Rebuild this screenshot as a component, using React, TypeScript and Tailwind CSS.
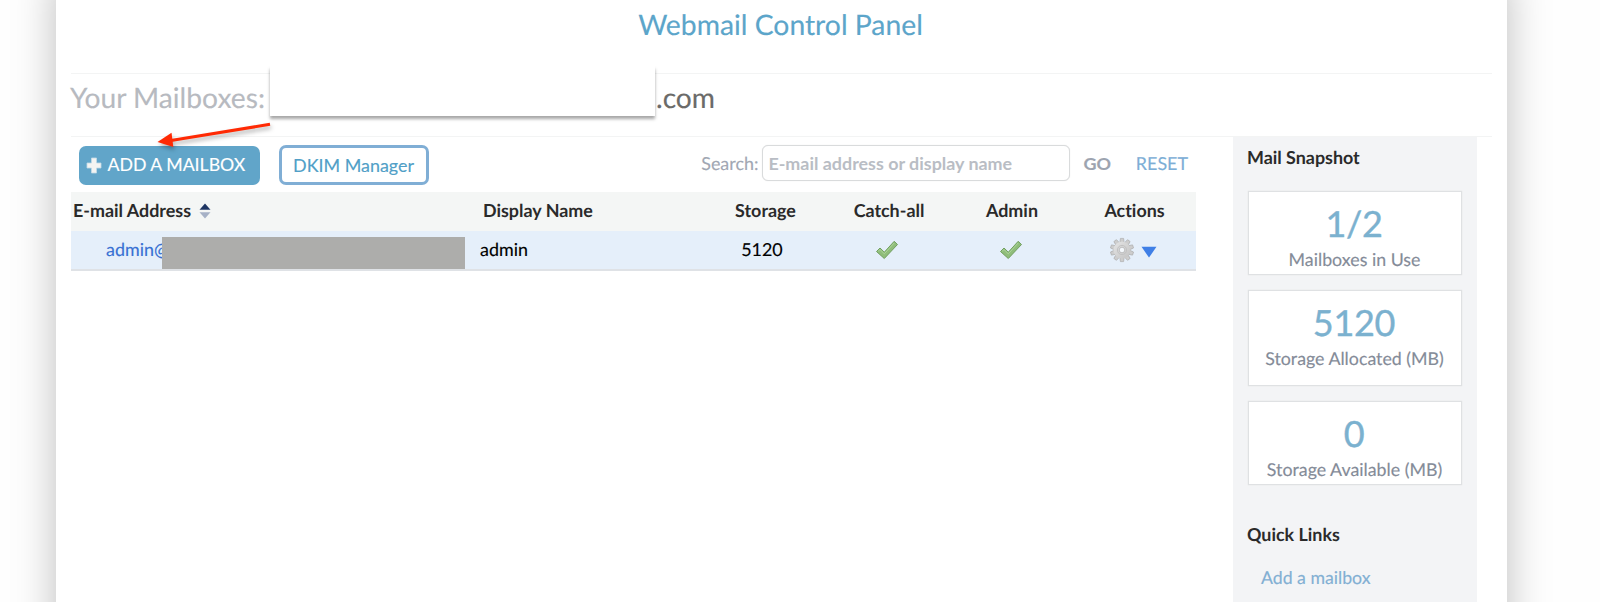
const stats = [
  { value: "1/2", label: "Mailboxes in Use", height: "h-[84px]" },
  { value: "5120", label: "Storage Allocated (MB)", height: "h-[96px]" },
  { value: "0", label: "Storage Available (MB)", height: "h-[84px]" },
];

const columns = "grid grid-cols-[408px_240px_126px_123px_123px_105px]";

function PlusIcon() {
  return (
    <svg width="16" height="17" viewBox="0 0 16 17" className="shrink-0">
      <path d="M5.5 1h5v5H15v5h-4.500v5h-5v-5H1V6h4.500z" fill="#f4f4f2" stroke="#c3dbe7" strokeWidth="0.8" />
    </svg>
  );
}

function SortIcon() {
  return (
    <svg width="12" height="16" viewBox="0 0 12 16" className="mt-[2px]">
      <path d="M6 0.500 11.500 6.700h-11z" fill="#1e3563" />
      <path d="M6 15.500 11.500 9.300h-11z" fill="#a6b1c6" />
    </svg>
  );
}

function CheckIcon() {
  return (
    <svg width="24" height="20" viewBox="0 0 24 20">
      <path d="M1.500 11.500 5 8l4.300 4.200L19.200 1.300 22.500 4.500 9.300 18.500z" fill="#8fbd7a" stroke="#719f60" strokeWidth="1" strokeLinejoin="round" />
      <path d="M3.200 11.200 5 9.600l4.300 4.200L19.200 3" fill="none" stroke="#add59a" strokeWidth="1" />
    </svg>
  );
}

function GearIcon() {
  const teeth = [0, 36, 72, 108, 144, 180, 216, 252, 288, 324];
  return (
    <svg width="26" height="26" viewBox="0 0 26 26">
      <defs>
        <linearGradient id="gear" x1="0" y1="0" x2="1" y2="1">
          <stop offset="0" stopColor="#e6e6e6" />
          <stop offset="1" stopColor="#c2c2c2" />
        </linearGradient>
      </defs>
      {teeth.map((a) => (
        <path key={a} d="M10.900 5.500 11.400 1.400h3.200l0.500 4.100z" fill="#cdcdcd" stroke="#aeaeae" strokeWidth="0.700" transform={`rotate(${a} 13 13)`} />
      ))}
      <circle cx="13" cy="13" r="8.600" fill="url(#gear)" />
      <circle cx="13" cy="13" r="4.600" fill="none" stroke="#c2c2c2" strokeWidth="1" />
      <circle cx="13" cy="13" r="2.800" fill="#f3f7fb" stroke="#b5b5b5" strokeWidth="0.800" />
    </svg>
  );
}

function CaretIcon() {
  return (
    <svg width="16" height="12" viewBox="0 0 16 12" className="mt-[3px]">
      <path d="M0.500 0.800h15L8 11.600z" fill="#3f7fe6" />
    </svg>
  );
}

function Arrow() {
  return (
    <svg width="120" height="40" viewBox="0 0 120 40" className="absolute left-[80px] top-[46px] drop-shadow-[1px_3px_2px_rgba(0,0,0,0.3)]">
      <path d="M119 4.300 20 20.500" stroke="#ff2a04" strokeWidth="3" />
      <path d="M6.500 22 20.500 12.800 22.300 27z" fill="#ff2a04" />
    </svg>
  );
}

export default function App() {
  return (
    <div className="h-[602px] overflow-hidden bg-[#fefefe] font-['Lato',sans-serif] text-[17.900px] leading-6 [font-variant-ligatures:none] [text-rendering:geometricPrecision] [-webkit-text-stroke:0.15px]">
      <main className="-mt-6 ml-14 h-[740px] w-[1451px] bg-white px-[15px] pt-6 shadow-[0_0_40px_rgba(0,0,0,0.26)]">
        <h1 className="-ml-[2px] h-[73px] pt-[9px] text-center text-[28.300px] leading-8 text-[#5ca5ca]">Webmail Control Panel</h1>

        <div className="relative flex h-16 items-start border-y border-[#f3f4f4] pt-2 text-[28.200px] leading-8">
          <span className="w-[199px] whitespace-nowrap text-[#b7bac0]"><span className="-ml-px">Your Mailboxes:</span></span>
          <div className="relative -mt-4 h-[50px] w-[385px] shrink-0 bg-white shadow-[0_3px_3px_rgba(0,0,0,0.35)]">
            <div className="absolute -left-1 -right-1 -top-2 h-2 bg-white" />
          </div>
          <span className="pl-px text-[#6b6b69]">.com</span>
          <Arrow />
        </div>

        <div className="flex">
          <section className="w-[1125px]">
            <div className="flex h-[55px] items-start">
              <button className="ml-[7.5px] mt-[9px] flex h-[39px] w-[181px] items-center gap-[6px] rounded-[7px] bg-[#61a5c9] pb-px pl-[7px] text-[17.700px] whitespace-nowrap text-white">
                <PlusIcon />
                ADD A MAILBOX
              </button>
              <button className="ml-[19px] mt-2 h-10 w-[150px] rounded-[7px] border-3 border-[#80aed5] pb-px text-[#519fc7]">DKIM Manager</button>
              <div className="ml-auto flex items-center pt-2">
                <label className="text-[#a1a7b3]">Search:</label>
                <input className="ml-1 h-[36px] w-[308px] rounded-[6px] border border-[#d9dbdc] bg-white px-[5px] pb-px font-bold shadow-[0_0_1px_#ddd] [-webkit-text-stroke:0] placeholder:text-[#b9bdc4]" placeholder="E-mail address or display name" />
                <button className="ml-[13px] font-bold text-[#9da4b0]">GO</button>
                <a className="ml-[25px] mr-2 text-[#7daed6]">RESET</a>
              </div>
            </div>

            <div className={`${columns} h-[39px] items-center bg-[#f4f6f5] pb-[3px] font-bold text-[#2a2a2a] [-webkit-text-stroke:0]`}>
              <div className="flex items-center gap-2 pl-[2px]">
                E-mail Address
                <SortIcon />
              </div>
              <div className="pl-1">Display Name</div>
              <div className="pr-[33px] text-center">Storage</div>
              <div className="pr-[35px] text-center">Catch-all</div>
              <div className="pr-[35px] text-center">Admin</div>
              <div className="pr-[18px] text-center">Actions</div>
            </div>
            <div className={`${columns} h-10 items-center border-b-2 border-[#dfe2e6] bg-[#e5effa] text-black`}>
              <div className="flex h-[38px] items-start pl-[35px] text-[#3871d3]">
                <div className="w-14 pt-[6px]">admin@</div>
                <div className="relative mt-[6px] h-8 w-[303px] bg-[#adadab]" />
              </div>
              <div className="pb-[2px] pl-[1px]">admin</div>
              <div className="pr-10 pb-[2px] text-center">5120</div>
              <div className="flex justify-center pr-10"><CheckIcon /></div>
              <div className="flex justify-center pr-[38px]"><CheckIcon /></div>
              <div className="flex items-center gap-[6px] pl-[18px]">
                <GearIcon />
                <CaretIcon />
              </div>
            </div>
          </section>

          <aside className="ml-[37px] h-[465px] w-[244px] bg-[#f3f4f6] px-[15px] pt-2">
            <h2 className="-ml-px font-bold text-[#2a2a2a] [-webkit-text-stroke:0]">Mail Snapshot</h2>
            <div className="mt-[22px] flex flex-col gap-[15px]">
              {stats.map((s) => (
                <div key={s.label} className={`${s.height} w-[214px] border border-[#dfe1e3] bg-white pt-[8px] text-center whitespace-nowrap shadow-[0_0_1px_#ddd]`}>
                  <div className="-ml-[2px] mb-px text-[36px] leading-[46px] tracking-[-0.3px] text-[#7bb1cf] [-webkit-text-stroke:0.4px]">{s.value}</div>
                  <div className="-ml-px text-[17.800px] text-[#848b98]">{s.label}</div>
                </div>
              ))}
            </div>
            <h2 className="mt-[37px] -ml-px font-bold text-[#2a2a2a] [-webkit-text-stroke:0]">Quick Links</h2>
            <a className="mt-5 ml-[13px] block text-[17.700px] text-[#82afd3]">Add a mailbox</a>
          </aside>
        </div>
      </main>
    </div>
  );
}
